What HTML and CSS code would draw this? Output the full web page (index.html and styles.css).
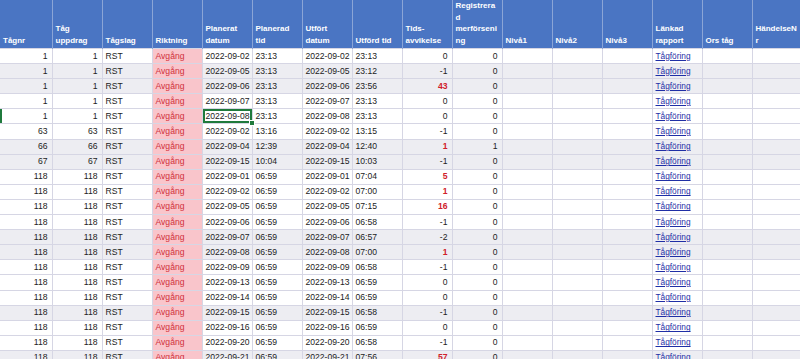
FILE: index.html
```html
<!DOCTYPE html>
<html lang="sv">
<head>
  <meta charset="UTF-8">
  <title>Tågföring - export</title>
  <link rel="stylesheet" href="styles.css">
</head>
<body>

<div class="sheet">
  <table class="grid">
    <colgroup>
      <col class="col-first">
      <col span="15" class="col">
    </colgroup>
    <thead>
      <tr class="head-row">
        <th>Tågnr</th>
        <th>Tåg uppdrag</th>
        <th>Tågslag</th>
        <th>Riktning</th>
        <th>Planerat datum</th>
        <th>Planerad tid</th>
        <th>Utfört datum</th>
        <th>Utförd tid</th>
        <th>Tids-avvikelse</th>
        <th>Registrerad merförsening</th>
        <th>Nivå1</th>
        <th>Nivå2</th>
        <th>Nivå3</th>
        <th>Länkad rapport</th>
        <th>Ors tåg</th>
        <th>HändelseNr</th>
      </tr>
    </thead>
    <tbody id="rows"></tbody>
  </table>
</div>

<script>
  // [tågnr, uppdrag, planerat datum, planerad tid, utfört datum, utförd tid, avvikelse, merförsening, grå rad]
  const rows = [
    [1, 1, '2022-09-02', '23:13', '2022-09-02', '23:13', 0, 0, false],
    [1, 1, '2022-09-05', '23:13', '2022-09-05', '23:12', -1, 0, true],
    [1, 1, '2022-09-06', '23:13', '2022-09-06', '23:56', 43, 0, true],
    [1, 1, '2022-09-07', '23:13', '2022-09-07', '23:13', 0, 0, false],
    [1, 1, '2022-09-08', '23:13', '2022-09-08', '23:13', 0, 0, false],
    [63, 63, '2022-09-02', '13:16', '2022-09-02', '13:15', -1, 0, false],
    [66, 66, '2022-09-04', '12:39', '2022-09-04', '12:40', 1, 1, true],
    [67, 67, '2022-09-15', '10:04', '2022-09-15', '10:03', -1, 0, true],
    [118, 118, '2022-09-01', '06:59', '2022-09-01', '07:04', 5, 0, false],
    [118, 118, '2022-09-02', '06:59', '2022-09-02', '07:00', 1, 0, false],
    [118, 118, '2022-09-05', '06:59', '2022-09-05', '07:15', 16, 0, false],
    [118, 118, '2022-09-06', '06:59', '2022-09-06', '06:58', -1, 0, false],
    [118, 118, '2022-09-07', '06:59', '2022-09-07', '06:57', -2, 0, true],
    [118, 118, '2022-09-08', '06:59', '2022-09-08', '07:00', 1, 0, true],
    [118, 118, '2022-09-09', '06:59', '2022-09-09', '06:58', -1, 0, false],
    [118, 118, '2022-09-13', '06:59', '2022-09-13', '06:59', 0, 0, false],
    [118, 118, '2022-09-14', '06:59', '2022-09-14', '06:59', 0, 0, false],
    [118, 118, '2022-09-15', '06:59', '2022-09-15', '06:58', -1, 0, true],
    [118, 118, '2022-09-16', '06:59', '2022-09-16', '06:59', 0, 0, false],
    [118, 118, '2022-09-20', '06:59', '2022-09-20', '06:58', -1, 0, false],
    [118, 118, '2022-09-21', '06:59', '2022-09-21', '07:56', 57, 0, true]
  ];

  const body = document.getElementById('rows');
  rows.forEach((r, i) => {
    const late = r[6] > 0 ? ' late' : '';
    const tr = document.createElement('tr');
    if (r[8]) tr.className = 'alt';
    if (i === 4) tr.classList.add('active');
    tr.innerHTML =
      '<td class="num">' + r[0] + '</td>' +
      '<td class="num">' + r[1] + '</td>' +
      '<td>RST</td>' +
      '<td class="dir">Avgång</td>' +
      '<td' + (i === 4 ? ' class="selected"' : '') + '>' + r[2] + '</td>' +
      '<td>' + r[3] + '</td>' +
      '<td>' + r[4] + '</td>' +
      '<td>' + r[5] + '</td>' +
      '<td class="num' + late + '">' + r[6] + '</td>' +
      '<td class="num">' + r[7] + '</td>' +
      '<td></td><td></td><td></td>' +
      '<td><a href="#" class="report">Tågföring</a></td>' +
      '<td></td><td></td>';
    body.appendChild(tr);
  });
</script>

</body>
</html>
```

FILE: styles.css
```css
body {
  margin: 0;
  padding: 0;
  background: #fff;
  font-family: 'Liberation Sans', Arial, sans-serif;
}

.sheet {
  width: 800px;
  height: 359px;
  overflow: hidden;
}

.grid {
  border-collapse: collapse;
  table-layout: fixed;
  width: 802px;
}

.col-first { width: 52px; }
.col { width: 50px; }

.head-row { height: 48px; }

th {
  background: #4a75c3;
  color: #fff;
  font-size: 8px;
  font-weight: bold;
  line-height: 11.5px;
  text-align: left;
  vertical-align: bottom;
  padding: 0 3px 2px 3px;
  border-left: 1px solid #8ba5d6;
  overflow-wrap: anywhere;
}
th:first-child { border-left: none; }

tbody tr { height: 15.1px; }

td {
  padding: 0 3px;
  font-size: 8.6px;
  line-height: 11px;
  color: #222;
  border: 1px solid #d6d6e4;
  white-space: nowrap;
  overflow: hidden;
}
td:first-child { border-left: none; }

tr.alt td { background: #ededf2; }

td.num { text-align: right; padding-right: 4px; }
td.late { color: #d0202a; font-weight: bold; }

td.dir,
tr.alt td.dir {
  background: #f9c5cb;
  color: #d0303a;
}

a.report {
  color: #1f2ea6;
  font-size: 8.3px;
  text-decoration: underline;
}

tr.active td:first-child { box-shadow: inset 2px 0 0 #1f7a3c; }

td.selected {
  position: relative;
  box-shadow: inset 0 0 0 2px #1f7a3c;
  overflow: visible;
}
td.selected::after {
  content: '';
  position: absolute;
  right: -3px;
  bottom: -3px;
  width: 4px;
  height: 4px;
  background: #1f7a3c;
  border: 1px solid #fff;
}
```
